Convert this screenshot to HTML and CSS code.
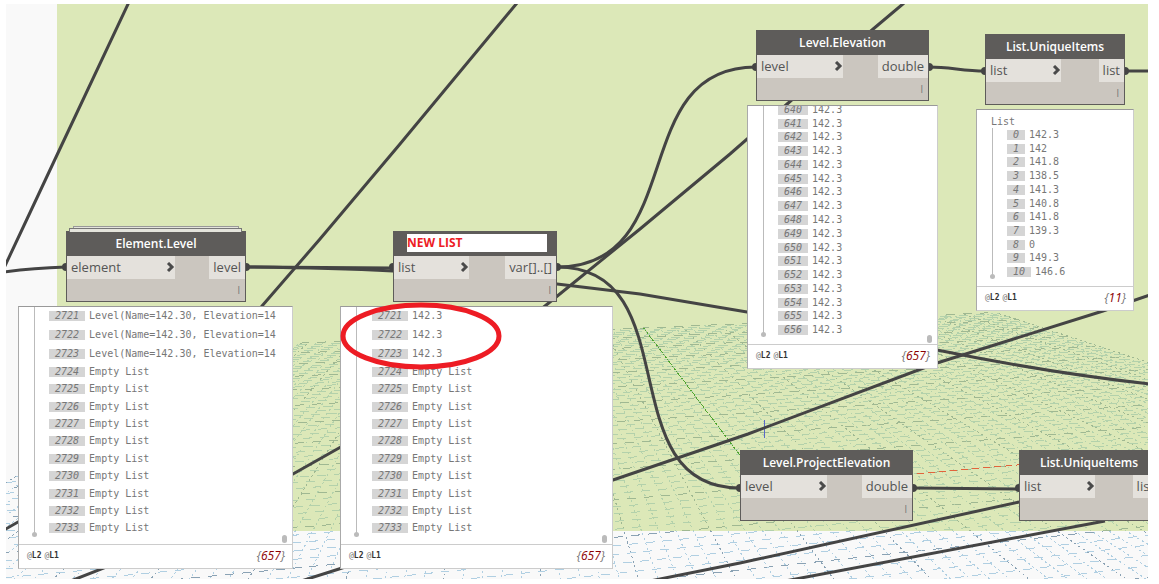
FILE: index.html
```html
<!DOCTYPE html>
<html lang="en">
<head>
    <meta charset="UTF-8">
    <title>Level graph</title>
    <meta name="viewport" content="width=device-width, initial-scale=1.0">
    <link rel="stylesheet" href="styles.css">
</head>
<body>
    <main class="workspace">
        <svg class="layer" aria-hidden="true"><g id="grid" transform="translate(-6 -4)"></g></svg>
        <div class="group"></div>

        <svg class="layer" aria-hidden="true">
            <g transform="translate(-6 -4)">
                <g id="axes"></g>
                <g class="wires">
                    <path d="M129 2L57 155L27 219L4 268"/>
                    <path d="M4 272Q32 268 66 267"/>
                    <path d="M517 3L400 144L320 239L262 306L150 425"/>
                    <path d="M904 3L872 30L786 105L730 154L640 229L545 306Q450 385 339 448L293 474L150 550L68 582"/>
                    <path d="M4 530L60 498"/>
                    <path d="M298 582L339 569L613 480L748 434L937 363L1103 311L1150 295"/>
                    <path d="M650 581L740 563L1019 502L1100 480"/>
                    <path d="M785 581Q920 556 1105 521"/>
                    <path d="M247 267L393 268"/>
                    <path d="M247 267Q330 268 393 271L557 284L640 294L747 312L937 350Q1050 373 1150 384"/>
                    <path d="M557 267C690 267 625 67 756 67"/>
                    <path d="M557 267C690 267 608 488 740 488"/>
                    <path d="M929 67C950 67 963 71 985 71"/>
                    <path d="M1125 71H1150"/>
                    <path d="M913 488L1019 489"/>
                </g>
                <g class="pins">
                    <circle cx="66" cy="267" r="4"/><circle cx="246" cy="267" r="4"/>
                    <circle cx="393" cy="267" r="4"/><circle cx="557" cy="267" r="4"/>
                    <circle cx="756" cy="67" r="4"/><circle cx="929" cy="67" r="4"/>
                    <circle cx="985" cy="71" r="4"/><circle cx="1125" cy="71" r="4"/>
                    <circle cx="740" cy="488" r="4"/><circle cx="913" cy="488" r="4"/>
                    <circle cx="1019" cy="488" r="4"/>
                </g>
            </g>
        </svg>

        <section class="node stacked" id="element-level">
            <h2>Element.Level</h2>
            <div class="ports">
                <div class="port">element <button class="chevron" aria-label="Use levels"><svg viewBox="0 0 9 11"><path d="M2 1l4 4-4 4"/></svg></button></div>
                <div class="port">level</div>
            </div>
            <div class="lacing">l</div>
        </section>

        <section class="node" id="new-list">
            <div class="rename"><input type="text" value="NEW LIST" aria-label="Node name"></div>
            <div class="ports">
                <div class="port">list <button class="chevron" aria-label="Use levels"><svg viewBox="0 0 9 11"><path d="M2 1l4 4-4 4"/></svg></button></div>
                <div class="port">var[]..[]</div>
            </div>
            <div class="lacing">l</div>
        </section>

        <section class="node" id="level-elevation">
            <h2>Level.Elevation</h2>
            <div class="ports">
                <div class="port">level <button class="chevron" aria-label="Use levels"><svg viewBox="0 0 9 11"><path d="M2 1l4 4-4 4"/></svg></button></div>
                <div class="port">double</div>
            </div>
            <div class="lacing">l</div>
        </section>

        <section class="node" id="unique-items">
            <h2>List.UniqueItems</h2>
            <div class="ports">
                <div class="port">list <button class="chevron" aria-label="Use levels"><svg viewBox="0 0 9 11"><path d="M2 1l4 4-4 4"/></svg></button></div>
                <div class="port">list</div>
            </div>
            <div class="lacing">l</div>
        </section>

        <section class="node" id="project-elevation">
            <h2>Level.ProjectElevation</h2>
            <div class="ports">
                <div class="port">level <button class="chevron" aria-label="Use levels"><svg viewBox="0 0 9 11"><path d="M2 1l4 4-4 4"/></svg></button></div>
                <div class="port">double</div>
            </div>
            <div class="lacing">l</div>
        </section>

        <section class="node" id="unique-items-2">
            <h2>List.UniqueItems</h2>
            <div class="ports">
                <div class="port">list <button class="chevron" aria-label="Use levels"><svg viewBox="0 0 9 11"><path d="M2 1l4 4-4 4"/></svg></button></div>
                <div class="port">list</div>
            </div>
            <div class="lacing"></div>
        </section>

        <section class="preview" id="element-level-preview">
            <div class="tree">
                <ul class="rows loose">
                    <li><i>2721</i>Level(Name=142.30, Elevation=14</li>
                    <li><i>2722</i>Level(Name=142.30, Elevation=14</li>
                    <li><i>2723</i>Level(Name=142.30, Elevation=14</li>
                </ul>
                <ul class="rows medium">
                    <li><i>2724</i>Empty List</li>
                    <li><i>2725</i>Empty List</li>
                    <li><i>2726</i>Empty List</li>
                    <li><i>2727</i>Empty List</li>
                    <li><i>2728</i>Empty List</li>
                    <li><i>2729</i>Empty List</li>
                    <li><i>2730</i>Empty List</li>
                    <li><i>2731</i>Empty List</li>
                    <li><i>2732</i>Empty List</li>
                    <li><i>2733</i>Empty List</li>
                </ul>
                <span class="thumb"></span>
            </div>
            <footer><span>@<b>L2</b></span><span>@<b>L1</b></span><em>{<b>657</b>}</em></footer>
        </section>

        <section class="preview" id="new-list-preview">
            <div class="tree">
                <ul class="rows loose">
                    <li><i>2721</i>142.3</li>
                    <li><i>2722</i>142.3</li>
                    <li><i>2723</i>142.3</li>
                </ul>
                <ul class="rows medium">
                    <li><i>2724</i>Empty List</li>
                    <li><i>2725</i>Empty List</li>
                    <li><i>2726</i>Empty List</li>
                    <li><i>2727</i>Empty List</li>
                    <li><i>2728</i>Empty List</li>
                    <li><i>2729</i>Empty List</li>
                    <li><i>2730</i>Empty List</li>
                    <li><i>2731</i>Empty List</li>
                    <li><i>2732</i>Empty List</li>
                    <li><i>2733</i>Empty List</li>
                </ul>
                <span class="thumb"></span>
            </div>
            <footer><span>@<b>L2</b></span><span>@<b>L1</b></span><em>{<b>657</b>}</em></footer>
        </section>

        <section class="preview" id="level-elevation-preview">
            <div class="tree">
                <ul class="rows dense">
                    <li><i>640</i>142.3</li>
                    <li><i>641</i>142.3</li>
                    <li><i>642</i>142.3</li>
                    <li><i>643</i>142.3</li>
                    <li><i>644</i>142.3</li>
                    <li><i>645</i>142.3</li>
                    <li><i>646</i>142.3</li>
                    <li><i>647</i>142.3</li>
                    <li><i>648</i>142.3</li>
                    <li><i>649</i>142.3</li>
                    <li><i>650</i>142.3</li>
                    <li><i>651</i>142.3</li>
                    <li><i>652</i>142.3</li>
                    <li><i>653</i>142.3</li>
                    <li><i>654</i>142.3</li>
                    <li><i>655</i>142.3</li>
                    <li><i>656</i>142.3</li>
                </ul>
                <span class="thumb"></span>
            </div>
            <footer><span>@<b>L2</b></span><span>@<b>L1</b></span><em>{<b>657</b>}</em></footer>
        </section>

        <section class="preview" id="unique-items-preview">
            <h3>List</h3>
            <div class="tree">
                <ul class="rows unique">
                    <li><i>0</i>142.3</li>
                    <li><i>1</i>142</li>
                    <li><i>2</i>141.8</li>
                    <li><i>3</i>138.5</li>
                    <li><i>4</i>141.3</li>
                    <li><i>5</i>140.8</li>
                    <li><i>6</i>141.8</li>
                    <li><i>7</i>139.3</li>
                    <li><i>8</i>0</li>
                    <li><i>9</i>149.3</li>
                    <li><i>10</i>146.6</li>
                </ul>
            </div>
            <footer><span>@<b>L2</b></span><span>@<b>L1</b></span><em>{<b>11</b>}</em></footer>
        </section>

        <svg class="layer" aria-hidden="true">
            <ellipse class="mark" cx="415" cy="332" rx="78" ry="31"/>
        </svg>
    </main>

    <script>
        // Floor grid in two point perspective, 50 cells each way from the origin
        const origin = [764, 487];
        const depth = { point: [512, 154], step: 0.01828 };
        const side = { point: [4600, 154], step: 0.00374 };

        function project(u, v) {
            const a = u * depth.step;
            const b = v * side.step;
            return [0, 1].map(i => (origin[i] + a * depth.point[i] + b * side.point[i]) / (1 + a + b));
        }

        function addLine(parent, from, to, name) {
            const line = document.createElementNS("http://www.w3.org/2000/svg", "line");
            line.setAttribute("x1", from[0]);
            line.setAttribute("y1", from[1]);
            line.setAttribute("x2", to[0]);
            line.setAttribute("y2", to[1]);
            line.setAttribute("class", name);
            parent.appendChild(line);
        }

        const grid = document.getElementById("grid");
        const axes = document.getElementById("axes");

        for (let n = -50; n <= 50; n++) {
            const weight = n % 5 === 0 ? " major" : "";
            addLine(grid, project(-35, n), project(50, n), "along" + weight);
            if (n >= -35) {
                addLine(grid, project(n, -50), project(n, 50), "across" + weight);
            }
        }

        addLine(axes, project(0, 0), project(50, 0), "axis-y");
        addLine(axes, project(0, 0), project(0, 50), "axis-x");
        addLine(axes, [764, 438], [764, 420], "axis-z");
    </script>
</body>
</html>
```

FILE: styles.css
```css
* { box-sizing: border-box; }
body { margin: 0; background: #fff; font-family: "Open Sans", sans-serif; font-size: 13px; color: #555; }
h2, h3, ul { margin: 0; padding: 0; font-weight: normal; }

.workspace { position: relative; height: calc(100vh - 9px); margin: 4px 11px 5px 6px; background: #f9f9f9; overflow: hidden; }
.layer { position: absolute; left: 0; top: 0; width: 100%; height: 100%; pointer-events: none; }
.group { position: absolute; left: 51px; right: 0; top: 0; height: 527px; background: rgba(185, 211, 104, 0.45); }

/* floor grid */
#grid line { stroke: #b0cfe2; shape-rendering: crispEdges; }
#grid .major { stroke: #8aa2b4; }
#grid .along { stroke-dasharray: 2 3; }
#grid .across { stroke-dasharray: 9 8; }
#axes line { shape-rendering: crispEdges; }
.axis-x { stroke: #e2643c; stroke-dasharray: 7 4; }
.axis-y { stroke: #4fa52f; stroke-dasharray: 2 1; }
.axis-z { stroke: #5a68c8; }

.wires path { fill: none; stroke: #444; stroke-width: 3; }
.pins circle { fill: #444; }
.mark { fill: none; stroke: #ed1c24; stroke-width: 5; }

/* nodes */
.node { position: absolute; background: #cbc6bf; border: 1px solid #5e5c5a; }
.node h2, .rename { height: 24px; background: #5e5c5a; }
.node h2 { color: #fff; font-size: 12px; font-weight: 600; line-height: 24px; text-align: center; }
.rename { padding: 2px 9px 4px 13px; }
.rename input { display: block; width: 100%; height: 18px; padding: 0; border: 0; background: #fff; color: #ed1c24; font: bold 12px/18px "Open Sans", sans-serif; }
.ports { display: flex; justify-content: space-between; height: 23px; }
.port { display: flex; align-items: center; gap: 45px; padding: 0 4px; background: #e4e1dc; line-height: 23px; }
.port:first-child { padding-right: 0; }
.chevron { width: 9px; height: 11px; padding: 0; border: 0; background: none; }
.chevron svg { display: block; width: 9px; height: 11px; fill: none; stroke: #4a4a4a; stroke-width: 3; }
.lacing { height: 22px; padding-right: 5px; color: #777; font-size: 10px; line-height: 22px; text-align: right; }
.stacked::before, .stacked::after { content: ""; position: absolute; border: 1px solid #999; border-bottom: 0; background: #e4e4dc; }
.stacked::before { left: 6px; right: 6px; top: -6px; height: 3px; }
.stacked::after { left: 2px; right: 3px; top: -4px; height: 3px; border-color: #777; }

#element-level { left: 60px; top: 227px; width: 180px; }
#new-list { left: 387px; top: 227px; width: 164px; }
#level-elevation { left: 750px; top: 26px; width: 173px; }
#unique-items { left: 979px; top: 30px; width: 140px; }
#project-elevation { left: 734px; top: 446px; width: 173px; }
#unique-items-2 { left: 1013px; top: 446px; width: 140px; }

/* output previews */
.preview { position: absolute; display: flex; flex-direction: column; background: #fff; border: 1px solid #bbb; border-color: #999 #ccc #ccc #aaa; color: #777; font-family: "DejaVu Sans Mono", monospace; font-size: 10px; }
.preview h3 { height: 18px; padding-left: 14px; font-size: 10px; line-height: 24px; }
.tree { position: relative; flex: 1; min-height: 0; display: flex; flex-direction: column; justify-content: flex-end; padding: 0 0 7px 30px; overflow: hidden; }
.tree::before { content: ""; position: absolute; left: 15px; top: 0; bottom: 9px; width: 1px; background: #bbb; }
.tree::after { content: ""; position: absolute; left: 13px; bottom: 7px; width: 5px; height: 5px; border-radius: 50%; background: #bbb; }
.rows { flex: none; display: flex; flex-direction: column; list-style: none; }
.rows li { flex: 1; display: flex; align-items: center; gap: 4px; line-height: 10px; white-space: pre; }
.rows i { padding: 0 6px; background: #d5d5d5; }
.loose { height: 57px; }
.medium { height: 174px; }
.dense { height: 234px; }
.unique { height: 151px; }
.thumb { position: absolute; right: 5px; bottom: 1px; width: 5px; height: 8px; border-radius: 3px; background: #bbb; }
.preview footer { display: flex; align-items: center; gap: 3px; height: 24px; padding: 0 7px 2px 8px; border-top: 1px solid #ccc; font-size: 8px; }
.preview footer span b { color: #333; }
.preview footer em { margin-left: auto; font-family: "Open Sans", sans-serif; font-size: 12px; }
.preview footer em b { color: #8b0000; font-weight: normal; }

#element-level-preview { left: 12px; top: 302px; width: 275px; height: 263px; }
#new-list-preview { left: 334px; top: 302px; width: 273px; height: 263px; }
#new-list-preview .tree { padding-left: 31px; }
#level-elevation-preview { left: 741px; top: 101px; width: 191px; height: 264px; }
#unique-items-preview { left: 970px; top: 105px; width: 158px; height: 202px; }
```
